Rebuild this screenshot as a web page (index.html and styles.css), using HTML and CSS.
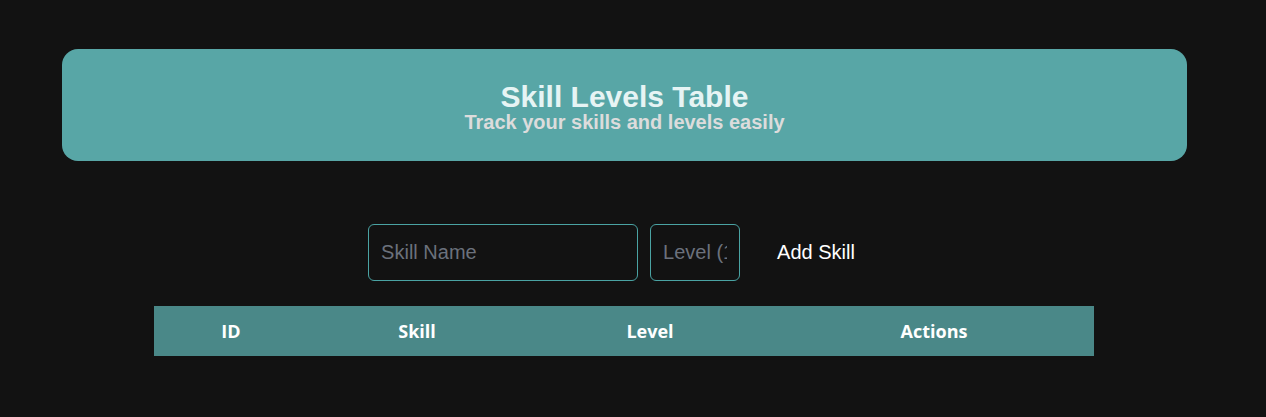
FILE: index.html
```html
<!DOCTYPE html>
<html lang="en">
<head>
<meta charset="UTF-8">
<title>Skill Levels Table</title>
<link rel="stylesheet" href="styles.css">
</head>
<body>
<div class="container">
  <header class="hero">
    <h1 class="hero-title">Skill Levels Table</h1>
    <p class="hero-sub">Track your skills and levels easily</p>
  </header>
  <form class="skill-form">
    <input class="field field-name" type="text" placeholder="Skill Name">
    <input class="field field-level" type="number" placeholder="Level (1-10)">
    <button class="add-btn" type="button">Add Skill</button>
  </form>
  <table class="skills">
    <colgroup>
      <col class="c-id">
      <col class="c-skill">
      <col class="c-level">
      <col class="c-actions">
    </colgroup>
    <thead>
      <tr>
        <th>ID</th>
        <th>Skill</th>
        <th>Level</th>
        <th>Actions</th>
      </tr>
    </thead>
    <tbody></tbody>
  </table>
</div>
</body>
</html>
```

FILE: styles.css
```css
* { box-sizing: border-box; }
html, body {
  margin: 0;
  background: #121212;
}
body {
  font-family: "Liberation Sans", Arial, sans-serif;
  color: #ffffff;
}
.container {
  width: 1124px;
  margin-left: 62px;
  padding-top: 49px;
  display: flex;
  flex-direction: column;
  align-items: center;
}
.hero {
  align-self: flex-start;
  width: 1125px;
  background: #58a6a6;
  border-radius: 16px;
  padding: 33px 0 29px;
  display: flex;
  flex-direction: column;
  align-items: center;
  gap: 1px;
}
.hero-title {
  margin: 0;
  font-size: 30px;
  line-height: 30px;
  font-weight: bold;
  color: #e6f4f4;
}
.hero-sub {
  margin: 0;
  font-size: 20px;
  line-height: 19px;
  font-weight: bold;
  color: #dcdcdc;
}
.skill-form {
  margin-top: 63px;
  display: flex;
  align-items: center;
  gap: 12px;
}
.field {
  height: 57px;
  background: #121212;
  border: 1px solid #4aa3a3;
  border-radius: 6px;
  padding: 0 12px;
  font-family: "Liberation Sans", Arial, sans-serif;
  font-size: 20px;
  color: #e0e0e0;
  outline: none;
}
.field::placeholder { color: #6b717c; }
.field-name { width: 270px; }
.field-level { width: 90px; -moz-appearance: textfield; }
.field-level::-webkit-inner-spin-button,
.field-level::-webkit-outer-spin-button { -webkit-appearance: none; margin: 0; }
.add-btn {
  background: transparent;
  border: none;
  color: #ffffff;
  font-family: "Liberation Sans", Arial, sans-serif;
  font-size: 20px;
  padding: 12px 25px;
  cursor: pointer;
}
.skills {
  margin-top: 25px;
  width: 940px;
  border-collapse: collapse;
  table-layout: fixed;
}
.c-id { width: 154px; }
.c-skill { width: 218px; }
.c-level { width: 248px; }
.c-actions { width: 320px; }
.skills th {
  background: #4a8888;
  height: 50px;
  padding: 0;
  font-family: "Open Sans", "Noto Sans", sans-serif;
  font-size: 18px;
  font-weight: 700;
  color: #ffffff;
  text-align: center;
}
```
